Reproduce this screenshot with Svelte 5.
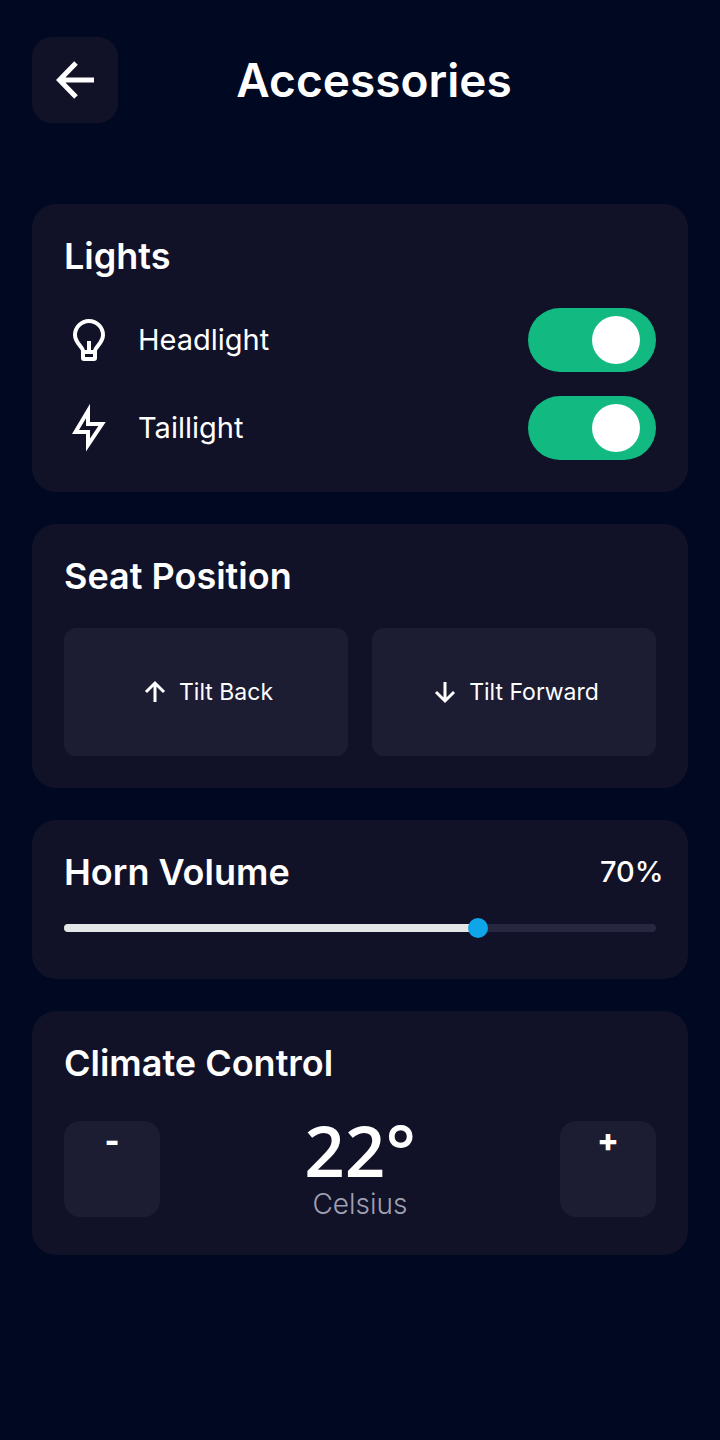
<script>
  let headlight = $state(true);
  let taillight = $state(true);
  let volume = $state(70);
  let temperature = $state(22);
</script>

<main class="screen">
  <header class="top-bar">
    <button class="back" type="button" aria-label="Back">
      <svg width="48" height="48" viewBox="0 0 48 48" fill="none" stroke="#ffffff" stroke-width="5">
        <path d="M43 24H9M25 7L8.500 24l16.500 17" />
      </svg>
    </button>
    <h1>Accessories</h1>
  </header>

  <section class="card">
    <h2>Lights</h2>
    <div class="lights">
      <div class="light">
        <svg width="50" height="50" viewBox="0 0 50 50" fill="none" stroke="#ffffff" stroke-width="4">
          <path d="M19 38v-2c0-4-8-8-8-16a14 14 0 0 1 28 0c0 8-8 12-8 16v2M25 26v10" />
          <path d="M19 37h12v6a1 1 0 0 1-1 1H20a1 1 0 0 1-1-1z" />
        </svg>
        <label for="headlight">Headlight</label>
        <input id="headlight" class="toggle" type="checkbox" bind:checked={headlight} />
      </div>
      <div class="light">
        <svg width="50" height="50" viewBox="0 0 50 50" fill="none" stroke="#ffffff" stroke-width="4">
          <path d="M24 8L11.500 29H24v13l14-21H24z" />
        </svg>
        <label for="taillight">Taillight</label>
        <input id="taillight" class="toggle" type="checkbox" bind:checked={taillight} />
      </div>
    </div>
  </section>

  <section class="card">
    <h2>Seat Position</h2>
    <div class="tilts">
      <button class="tilt" type="button">
        <svg width="32" height="32" viewBox="0 0 32 32" fill="none" stroke="#ffffff" stroke-width="3">
          <path d="M16 26V8M7 16l9-9 9 9" />
        </svg>
        Tilt Back
      </button>
      <button class="tilt" type="button">
        <svg width="32" height="32" viewBox="0 0 32 32" fill="none" stroke="#ffffff" stroke-width="3">
          <path d="M16 6v18M7 16l9 9 9-9" />
        </svg>
        Tilt Forward
      </button>
    </div>
  </section>

  <section class="card">
    <div class="card-header">
      <h2><label for="volume">Horn Volume</label></h2>
      <output class="volume" for="volume">{volume}%</output>
    </div>
    <div class="slider">
      <div class="track">
        <div class="fill" style="width: {volume}%"></div>
      </div>
      <input id="volume" type="range" min="0" max="100" bind:value={volume} />
    </div>
  </section>

  <section class="card">
    <h2>Climate Control</h2>
    <div class="climate">
      <button class="step" type="button" aria-label="Cooler" onclick={() => temperature--}>-</button>
      <div class="reading">
        <span class="degrees">{temperature}°</span>
        <span class="unit">Celsius</span>
      </div>
      <button class="step" type="button" aria-label="Warmer" onclick={() => temperature++}>+</button>
    </div>
  </section>
</main>

<style>
  :global(body) {
    margin: 0;
    background: #000822;
  }

  .screen {
    box-sizing: border-box;
    min-height: 100vh;
    padding: 37px 32px;
    display: flex;
    flex-direction: column;
    gap: 32px;
    color: #ffffff;
    font-family: Inter, "Open Sans", sans-serif;
  }

  button {
    border: 0;
    padding: 0;
    color: inherit;
    font-family: inherit;
    cursor: pointer;
  }

  /* Header */
  .top-bar {
    display: grid;
    grid-template-columns: 86px 1fr 58px;
    align-items: center;
    margin-bottom: 49px;
  }

  .back {
    display: flex;
    align-items: center;
    justify-content: center;
    height: 86px;
    border-radius: 20px;
    background: #111128;
  }

  h1 {
    margin: 0;
    font-size: 46px;
    font-weight: 600;
    line-height: 56px;
    text-align: center;
  }

  /* Cards */
  .card {
    padding: 32px;
    border-radius: 24px;
    background: #111128;
  }

  h2 {
    margin: 0 0 32px;
    font-size: 36px;
    font-weight: 600;
    line-height: 40px;
  }

  /* Lights */
  .lights {
    display: grid;
    gap: 24px;
  }

  .light {
    display: flex;
    align-items: center;
    gap: 24px;
  }

  .light label {
    flex: 1;
    font-size: 29px;
    line-height: 36px;
  }

  .toggle {
    appearance: none;
    box-sizing: border-box;
    display: flex;
    width: 128px;
    height: 64px;
    margin: 0;
    padding: 8px 16px;
    border-radius: 32px;
    background: #27273f;
    cursor: pointer;
  }

  .toggle::before {
    content: "";
    width: 48px;
    height: 48px;
    border-radius: 50%;
    background: #ffffff;
  }

  .toggle:checked {
    justify-content: flex-end;
    background: #12b981;
  }

  /* Seat position */
  .tilts {
    display: grid;
    grid-template-columns: 1fr 1fr;
    gap: 24px;
  }

  .tilt {
    display: flex;
    align-items: center;
    justify-content: center;
    gap: 8px;
    height: 128px;
    border-radius: 12px;
    background: #1c1c33;
    font-size: 23px;
  }

  /* Horn volume */
  .card-header {
    display: flex;
    justify-content: space-between;
    align-items: center;
    margin-bottom: 26px;
  }

  .card-header h2 {
    margin: 0;
  }

  .volume {
    width: 56px;
    font-size: 29px;
    font-weight: 500;
    line-height: 36px;
    white-space: nowrap;
  }

  .slider {
    display: grid;
    align-items: center;
    margin-bottom: 9px;
  }

  .track,
  .slider input {
    grid-area: 1 / 1;
  }

  .track {
    height: 8px;
    border-radius: 4px;
    background: #27273f;
    overflow: hidden;
  }

  .fill {
    height: 100%;
    background: #e5e7e6;
  }

  /* Reaches half a thumb past each end so the thumb centre meets the fill */
  .slider input {
    appearance: none;
    height: 20px;
    margin: 0 -10px;
    background: transparent;
    cursor: pointer;
  }

  .slider input::-webkit-slider-thumb {
    appearance: none;
    width: 20px;
    height: 20px;
    border-radius: 50%;
    background: #0ea5e9;
  }

  /* Climate control */
  .climate {
    display: flex;
    justify-content: space-between;
    align-items: center;
  }

  .step {
    display: flex;
    justify-content: center;
    align-items: flex-start;
    width: 96px;
    height: 96px;
    border-radius: 16px;
    background: #1c1c33;
    font-size: 32px;
    font-weight: 800;
    line-height: 40px;
  }

  .reading {
    display: flex;
    flex-direction: column;
    align-items: center;
  }

  .degrees {
    font-family: "Open Sans", sans-serif;
    font-size: 71px;
    font-weight: 600;
    line-height: 70px;
  }

  .unit {
    color: #9fa0b1;
    font-size: 28px;
    font-weight: 300;
    line-height: 38px;
  }
</style>
